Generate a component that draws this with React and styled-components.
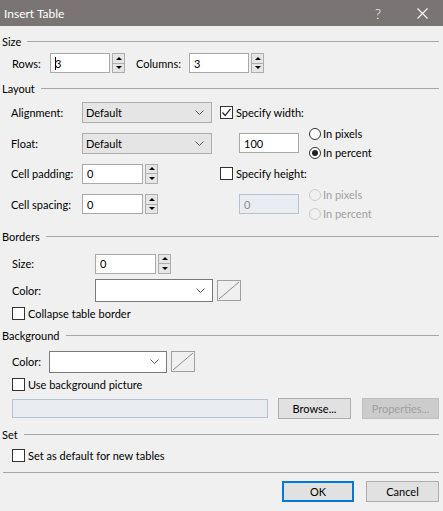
import React from 'react';
import styled, { createGlobalStyle } from 'styled-components';

const GlobalStyle = createGlobalStyle`
  html, body {
    margin: 0;
    padding: 0;
    background: #f0f0f0;
  }
  * {
    box-sizing: border-box;
  }
`;

const Window = styled.div`
  width: 443px;
  height: 511px;
  display: flex;
  flex-direction: column;
  overflow: hidden;
  background: #f0f0f0;
  color: #000;
  font-family: Lato, 'Liberation Sans', sans-serif;
  font-size: 11px;
`;

const TitleBar = styled.div`
  height: 26px;
  flex-shrink: 0;
  display: flex;
  align-items: center;
  padding-left: 4px;
  background: #7a7574;
  color: #fff;
  font-size: 12px;

  .title {
    flex: 1;
  }

  .help {
    width: 14px;
    margin-right: 32px;
    font-size: 14px;
    font-weight: 300;
    text-align: center;
  }

  .close {
    display: flex;
    margin-right: 15px;
  }
`;

const Content = styled.div`
  display: flex;
  flex-direction: column;
  padding: 0 4px 0 2px;
`;

const GroupHeader = styled.div`
  display: flex;
  align-items: center;
  height: 14px;
  margin-top: ${(p) => p.$top}px;

  &::after {
    content: '';
    flex: 1;
    height: 1px;
    margin-left: 6px;
    background: #a8a8a8;
  }
`;

const Row = styled.div`
  display: flex;
  align-items: center;
  height: ${(p) => p.$h || 20}px;
  margin-top: ${(p) => p.$top || 0}px;
  padding-left: ${(p) => p.$indent ?? 10}px;
  gap: ${(p) => p.$gap || 0}px;
`;

const Label = styled.span`
  width: ${(p) => (p.$w ? `${p.$w}px` : 'auto')};
  margin-left: ${(p) => p.$left || 0}px;
  flex-shrink: 0;
  white-space: nowrap;
`;

const TextBox = styled.div`
  width: ${(p) => p.$w}px;
  height: ${(p) => p.$h || 20}px;
  flex-shrink: 0;
  display: flex;
  align-items: center;
  padding-left: 4px;
  border: 1px solid ${(p) => (p.$disabled ? '#b4c2d2' : '#a9a9a9')};
  background: ${(p) => (p.$disabled ? '#e9edf2' : '#fff')};
  color: ${(p) => (p.$disabled ? '#8c8c8c' : '#000')};

  .caret {
    width: 1px;
    height: 13px;
    margin-right: -1px;
    background: #000;
  }
`;

const Spin = styled.div`
  width: 13px;
  height: 20px;
  margin-left: 2px;
  flex-shrink: 0;
  display: flex;
  flex-direction: column;
  border: 1px solid #adadad;
  background: #e6e6e6;
`;

const SpinHalf = styled.div`
  flex: 1;
  display: flex;
  align-items: center;
  justify-content: center;

  & + & {
    border-top: 1px solid #adadad;
  }

  &::before {
    content: '';
    border-left: 3px solid transparent;
    border-right: 3px solid transparent;
    ${(p) => (p.$down ? 'border-top: 3px solid #000;' : 'border-bottom: 3px solid #000;')}
  }
`;

const Select = styled.div`
  width: ${(p) => p.$w}px;
  height: ${(p) => p.$h || 21}px;
  flex-shrink: 0;
  display: flex;
  align-items: center;
  justify-content: space-between;
  padding: 0 7px 0 3px;
  border: 1px solid ${(p) => (p.$white ? '#7a7a7a' : '#adadad')};
  background: ${(p) => (p.$white ? '#fff' : '#e5e5e5')};
`;

const Swatch = styled.div`
  width: 24px;
  height: 21px;
  margin-left: 4px;
  flex-shrink: 0;
  border: 1px solid #a0a0a0;
  background: #f0f0f0;
  display: flex;
`;

const CheckRow = styled.label`
  display: flex;
  align-items: center;
  height: 13px;
  margin-top: ${(p) => p.$top || 0}px;
  padding-left: ${(p) => p.$indent ?? 10}px;
  white-space: nowrap;
`;

const Box = styled.span`
  width: 13px;
  height: 13px;
  margin-right: 3px;
  flex-shrink: 0;
  display: flex;
  align-items: center;
  justify-content: center;
  border: 1px solid #333;
  background: #fff;
`;

const RadioStack = styled.div`
  display: flex;
  flex-direction: column;
  gap: 6px;
  margin-left: 10px;
`;

const Radio = styled.label`
  display: flex;
  align-items: center;
  height: 13px;
  white-space: nowrap;
  color: ${(p) => (p.$disabled ? '#a0a0a0' : '#000')};

  .dot {
    width: 12px;
    height: 12px;
    margin-right: 2px;
    border-radius: 50%;
    display: flex;
    align-items: center;
    justify-content: center;
    border: 1px solid ${(p) => (p.$disabled ? '#cccccc' : '#333')};
    background: ${(p) => (p.$disabled ? '#f0f0f0' : '#fff')};
  }

  .dot::after {
    content: '';
    width: 6px;
    height: 6px;
    border-radius: 50%;
    background: ${(p) => (p.$checked ? '#222' : 'transparent')};
  }
`;

const LayoutGrid = styled.div`
  display: grid;
  grid-template-columns: 71px 138px 1fr;
  grid-template-rows: repeat(4, 21px);
  row-gap: 9.5px;
  margin-top: 7px;
  padding-left: 9px;
  align-items: center;
`;

const Cell = styled.div`
  display: flex;
  align-items: center;
`;

const SubRow = styled.div`
  display: flex;
  align-items: center;
  padding-left: 19px;
`;

const Button = styled.div`
  width: ${(p) => p.$w}px;
  height: 21px;
  flex-shrink: 0;
  display: flex;
  align-items: center;
  justify-content: center;
  border: ${(p) => (p.$default ? '2px solid #0078d7' : '1px solid #adadad')};
  background: ${(p) => (p.$disabled ? '#cccccc' : '#e1e1e1')};
  color: ${(p) => (p.$disabled ? '#a0a0a0' : '#000')};
  border-color: ${(p) => (p.$disabled ? '#bfbfbf' : undefined)};
`;

const Separator = styled.div`
  height: 1px;
  margin: 10px 0 0 1px;
  background: #a8a8a8;
`;

const Footer = styled.div`
  display: flex;
  justify-content: flex-end;
  gap: 12px;
  margin-top: 8px;
`;

const Chevron = () => (
  <svg width="9" height="5" viewBox="0 0 9 5">
    <polyline points="0.5,0.5 4.5,4.5 8.5,0.5" fill="none" stroke="#555" strokeWidth="1" />
  </svg>
);

const Diagonal = () => (
  <svg width="22" height="19" viewBox="0 0 22 19">
    <line x1="1" y1="18" x2="21" y2="1" stroke="#8a8a8a" strokeWidth="1" />
  </svg>
);

const Check = () => (
  <svg width="11" height="11" viewBox="0 0 11 11">
    <polyline points="1.5,5.5 4.2,8.5 9.5,1.8" fill="none" stroke="#222" strokeWidth="1.2" />
  </svg>
);

const SpinButtons = () => (
  <Spin>
    <SpinHalf />
    <SpinHalf $down />
  </Spin>
);

const Checkbox = ({ checked, children, ...rest }) => (
  <CheckRow {...rest}>
    <Box>{checked && <Check />}</Box>
    {children}
  </CheckRow>
);

const RadioPair = ({ disabled, selected }) => (
  <RadioStack>
    <Radio $disabled={disabled} $checked={selected === 'px'}>
      <span className="dot" />
      In pixels
    </Radio>
    <Radio $disabled={disabled} $checked={selected === 'pct'}>
      <span className="dot" />
      In percent
    </Radio>
  </RadioStack>
);

const App = () => (
  <>
    <GlobalStyle />
    <Window>
      <TitleBar>
        <span className="title">Insert Table</span>
        <span className="help">?</span>
        <span className="close">
          <svg width="11" height="11" viewBox="0 0 11 11">
            <path d="M0.5 0.5 L10.5 10.5 M10.5 0.5 L0.5 10.5" stroke="#fff" strokeWidth="1.1" />
          </svg>
        </span>
      </TitleBar>

      <Content>
        <GroupHeader $top={8}>Size</GroupHeader>
        <Row $top={5}>
          <Label $w={38}>Rows:</Label>
          <TextBox $w={60}>
            <span className="caret" />3
          </TextBox>
          <SpinButtons />
          <Label $w={53} $left={11}>
            Columns:
          </Label>
          <TextBox $w={60}>3</TextBox>
          <SpinButtons />
        </Row>

        <GroupHeader $top={8}>Layout</GroupHeader>
        <LayoutGrid>
          <Label>Alignment:</Label>
          <Select $w={130}>
            Default
            <Chevron />
          </Select>
          <Checkbox checked $indent={0}>
            Specify width:
          </Checkbox>

          <Label>Float:</Label>
          <Select $w={130}>
            Default
            <Chevron />
          </Select>
          <SubRow>
            <TextBox $w={60}>100</TextBox>
            <RadioPair selected="pct" />
          </SubRow>

          <Label>Cell padding:</Label>
          <Cell>
            <TextBox $w={61}>0</TextBox>
            <SpinButtons />
          </Cell>
          <Checkbox $indent={0}>Specify height:</Checkbox>

          <Label>Cell spacing:</Label>
          <Cell>
            <TextBox $w={61}>0</TextBox>
            <SpinButtons />
          </Cell>
          <SubRow>
            <TextBox $w={60} $disabled>
              0
            </TextBox>
            <RadioPair disabled />
          </SubRow>
        </LayoutGrid>

        <GroupHeader $top={15}>Borders</GroupHeader>
        <Row $top={10}>
          <Label $w={83}>Size:</Label>
          <TextBox $w={61}>0</TextBox>
          <SpinButtons />
        </Row>
        <Row $top={5} $h={23}>
          <Label $w={83}>Color:</Label>
          <Select $w={118} $h={23} $white>
            <span />
            <Chevron />
          </Select>
          <Swatch>
            <Diagonal />
          </Swatch>
        </Row>
        <Checkbox $top={5}>Collapse table border</Checkbox>

        <GroupHeader $top={9}>Background</GroupHeader>
        <Row $top={8} $h={22}>
          <Label $w={37}>Color:</Label>
          <Select $w={118} $h={22} $white>
            <span />
            <Chevron />
          </Select>
          <Swatch>
            <Diagonal />
          </Swatch>
        </Row>
        <Checkbox $top={5}>Use background picture</Checkbox>
        <Row $top={7} $h={21} $gap={10}>
          <TextBox $w={256} $h={19} $disabled />
          <Button $w={73}>Browse...</Button>
          <Button $w={77} $disabled style={{ marginLeft: 1 }}>
            Properties...
          </Button>
        </Row>

        <GroupHeader $top={9}>Set</GroupHeader>
        <Checkbox $top={7}>Set as default for new tables</Checkbox>

        <Separator />
        <Footer>
          <Button $w={72} $default>
            OK
          </Button>
          <Button $w={73}>Cancel</Button>
        </Footer>
      </Content>
    </Window>
  </>
);

export default App;
